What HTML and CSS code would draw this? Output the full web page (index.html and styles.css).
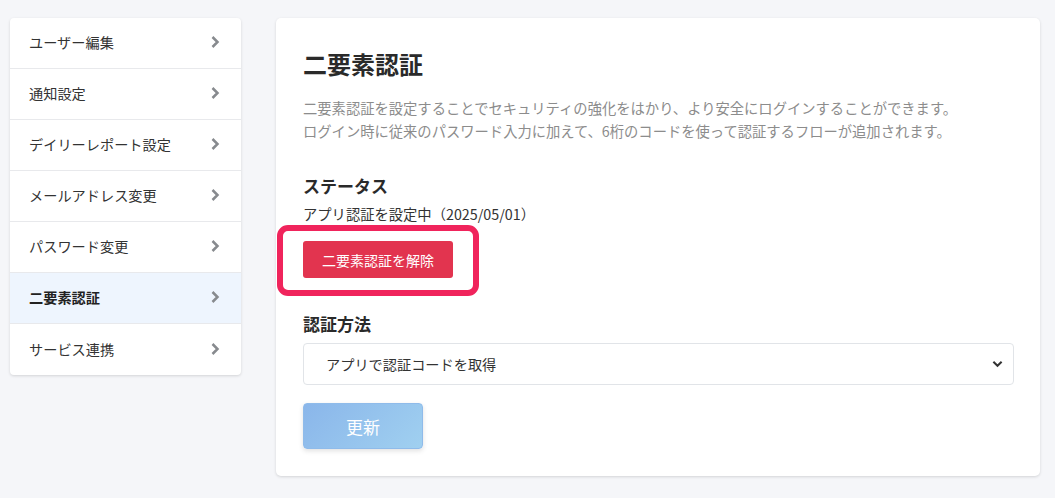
FILE: index.html
```html
<!DOCTYPE html>
<html lang="ja">
<head>
<meta charset="utf-8">
<link rel="stylesheet" href="styles.css">
</head>
<body>
<div class="layout">
  <nav class="side">
    <a class="side-item">ユーザー編集<svg class="chev" viewBox="0 0 10 14"><path d="M2.5 2 L7.5 7 L2.5 12"/></svg></a>
    <a class="side-item">通知設定<svg class="chev" viewBox="0 0 10 14"><path d="M2.5 2 L7.5 7 L2.5 12"/></svg></a>
    <a class="side-item">デイリーレポート設定<svg class="chev" viewBox="0 0 10 14"><path d="M2.5 2 L7.5 7 L2.5 12"/></svg></a>
    <a class="side-item">メールアドレス変更<svg class="chev" viewBox="0 0 10 14"><path d="M2.5 2 L7.5 7 L2.5 12"/></svg></a>
    <a class="side-item">パスワード変更<svg class="chev" viewBox="0 0 10 14"><path d="M2.5 2 L7.5 7 L2.5 12"/></svg></a>
    <a class="side-item active">二要素認証<svg class="chev" viewBox="0 0 10 14"><path d="M2.5 2 L7.5 7 L2.5 12"/></svg></a>
    <a class="side-item">サービス連携<svg class="chev" viewBox="0 0 10 14"><path d="M2.5 2 L7.5 7 L2.5 12"/></svg></a>
  </nav>
  <main class="card">
    <h1 class="title">二要素認証</h1>
    <p class="desc">二要素認証を設定することでセキュリティの強化をはかり、より安全にログインすることができます。<br>ログイン時に従来のパスワード入力に加えて、6桁のコードを使って認証するフローが追加されます。</p>
    <h2 class="sub">ステータス</h2>
    <p class="status">アプリ認証を設定中（2025/05/01）</p>
    <div class="btn-wrap">
      <button class="btn-danger">二要素認証を解除</button>
      <span class="highlight"></span>
    </div>
    <h2 class="sub sub2">認証方法</h2>
    <div class="select">
      <span>アプリで認証コードを取得</span>
      <svg class="sel-chev" viewBox="0 0 12 8"><path d="M1.5 1.5 L6 6 L10.5 1.5"/></svg>
    </div>
    <button class="btn-update">更新</button>
  </main>
</div>
</body>
</html>
```
FILE: styles.css
```css
* { box-sizing: border-box; }
html, body { margin: 0; padding: 0; }
body {
  background: #f5f6f9;
  font-family: "Noto Sans CJK JP", "Noto Sans", sans-serif;
  color: #333;
  width: 1055px;
  height: 498px;
  overflow: hidden;
}
.layout {
  display: flex;
  align-items: flex-start;
  gap: 35px;
  padding: 18px 0 0 10px;
}
.side {
  width: 231px;
  background: #fff;
  border-radius: 4px;
  box-shadow: 0 1px 3px rgba(0,0,0,0.14);
  display: flex;
  flex-direction: column;
  overflow: hidden;
}
.side-item {
  height: 51px;
  display: flex;
  align-items: center;
  justify-content: space-between;
  padding: 0 21px 2px 19px;
  font-size: 14.2px;
  color: #333;
  border-bottom: 1px solid #e8e9ec;
}
.side-item:last-child { border-bottom: none; }
.side-item.active {
  background: #eef5fe;
  font-weight: 700;
  color: #222;
}
.chev {
  width: 10px;
  height: 14px;
  fill: none;
  stroke: #878a8e;
  stroke-width: 2.5;
}
.card {
  width: 764px;
  height: 458px;
  background: #fff;
  border-radius: 5px;
  box-shadow: 0 1px 3px rgba(0,0,0,0.14);
  padding: 30px 26px 0 27px;
}
.title {
  margin: 0;
  font-size: 24px;
  font-weight: 700;
  line-height: 32px;
  color: #2a2a2a;
}
.desc {
  margin: 16px 0 0;
  font-size: 14.3px;
  line-height: 23px;
  color: #8c8c8c;
}
.sub {
  margin: 32px 0 0;
  font-size: 17px;
  font-weight: 700;
  line-height: 24px;
  color: #2a2a2a;
}
.status {
  margin: 5px 0 0;
  font-size: 14.3px;
  line-height: 22px;
  color: #333;
}
.btn-wrap {
  position: relative;
  margin-top: 16px;
  width: 150px;
}
.btn-danger {
  display: block;
  width: 150px;
  height: 37px;
  border: none;
  border-radius: 3px;
  background: #e2344f;
  color: #fff;
  font-family: inherit;
  font-size: 14px;
  padding: 0;
}
.highlight {
  position: absolute;
  left: -26px;
  top: -16px;
  width: 202px;
  height: 71px;
  border: 6px solid #f0245c;
  border-radius: 11px;
}
.sub2 { margin-top: 34px; }
.select {
  margin-top: 7px;
  height: 42px;
  border: 1px solid #e1e4e8;
  border-radius: 4px;
  display: flex;
  align-items: center;
  justify-content: space-between;
  padding: 0 10px 0 22px;
  font-size: 14.2px;
  color: #333;
}
.sel-chev {
  width: 11px;
  height: 8px;
  fill: none;
  stroke: #333;
  stroke-width: 2.2;
}
.btn-update {
  display: block;
  margin-top: 18px;
  width: 120px;
  height: 46px;
  border: 1px solid #8fbbea;
  border-radius: 4px;
  background: linear-gradient(135deg, #8ab6ea, #a0d0f0);
  color: #fff;
  font-family: inherit;
  font-size: 17px;
  box-shadow: 0 2px 5px rgba(0,0,0,0.12);
  padding: 0;
}
```
